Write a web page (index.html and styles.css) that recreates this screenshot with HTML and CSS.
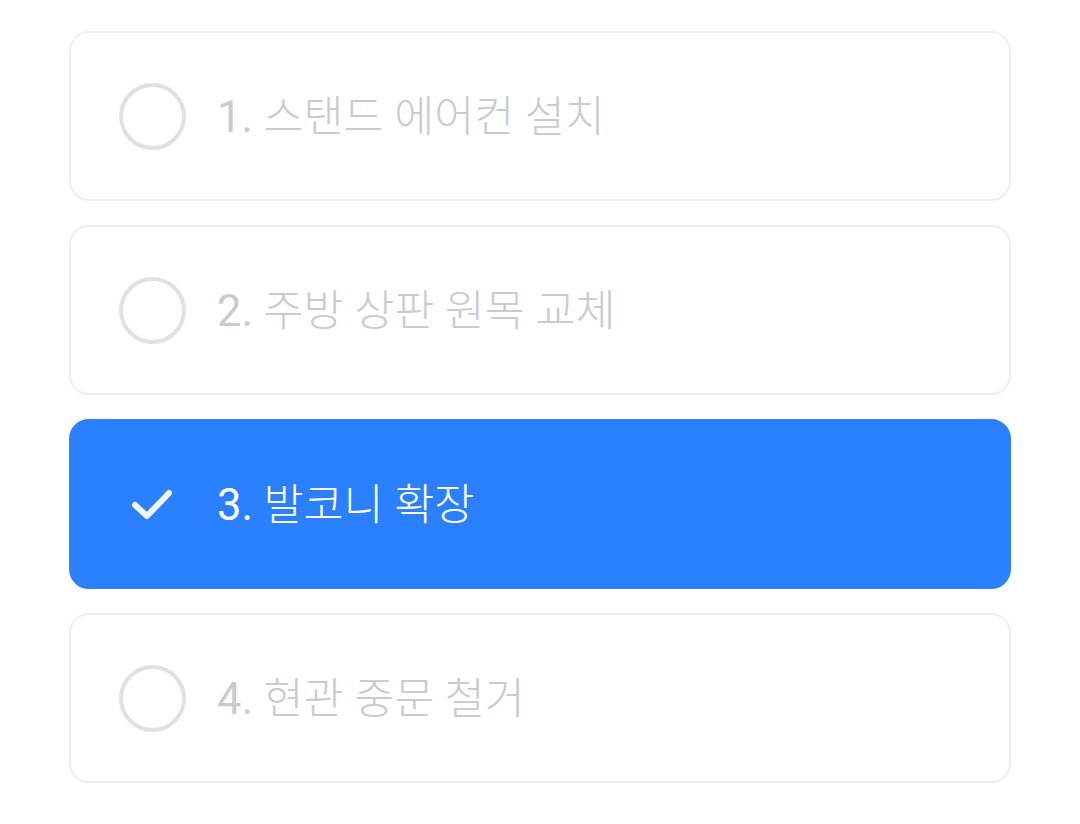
FILE: index.html
```html
<!DOCTYPE html>
<html lang="ko">
<head>
    <meta charset="UTF-8">
    <meta name="viewport" content="width=device-width, initial-scale=1.0">
    <title>선택 목록</title>
    <link rel="stylesheet" href="styles.css">
</head>
<body>
    <div class="option-list">
        <div class="option">
            <span class="option-radio"></span>
            <span class="option-label"><span class="option-num">1.</span> 스탠드 에어컨 설치</span>
        </div>
        <div class="option">
            <span class="option-radio"></span>
            <span class="option-label"><span class="option-num">2.</span> 주방 상판 원목 교체</span>
        </div>
        <div class="option selected">
            <span class="option-check">
                <svg width="50" height="40" viewBox="0 0 50 40">
                    <path d="M7 21 L19 32 L41 9" fill="none" stroke="#f2f5fa" stroke-width="6" stroke-linecap="round" stroke-linejoin="round"/>
                </svg>
            </span>
            <span class="option-label"><span class="option-num">3.</span> 발코니 확장</span>
        </div>
        <div class="option">
            <span class="option-radio"></span>
            <span class="option-label"><span class="option-num">4.</span> 현관 중문 철거</span>
        </div>
    </div>
</body>
</html>
```

FILE: styles.css
```css
body {
    font-family: 'Roboto', 'Noto Sans CJK KR', sans-serif;
    background-color: #ffffff;
    margin: 0;
    padding: 0;
}

.option-list {
    display: flex;
    flex-direction: column;
    gap: 24px;
    padding: 31px 69px 0 69px;
}

.option {
    display: flex;
    align-items: center;
    height: 170px;
    box-sizing: border-box;
    border: 2px solid #eceef0;
    border-radius: 20px;
    padding-left: 48px;
    background: #ffffff;
}

.option-radio {
    width: 67px;
    height: 67px;
    box-sizing: border-box;
    border: 4px solid #dfe2e5;
    border-radius: 50%;
    flex-shrink: 0;
}

.option-check {
    width: 67px;
    height: 67px;
    display: flex;
    align-items: center;
    justify-content: center;
    flex-shrink: 0;
}

.option-label {
    margin-left: 31px;
    margin-bottom: 6px;
    font-size: 43.5px;
    font-weight: 300;
    color: #c8cbd0;
}

.option-num {
    font-weight: 400;
}

.option.selected {
    background-color: #2b80ff;
    border-color: #2b80ff;
}

.option.selected .option-label {
    color: #ffffff;
}
```
